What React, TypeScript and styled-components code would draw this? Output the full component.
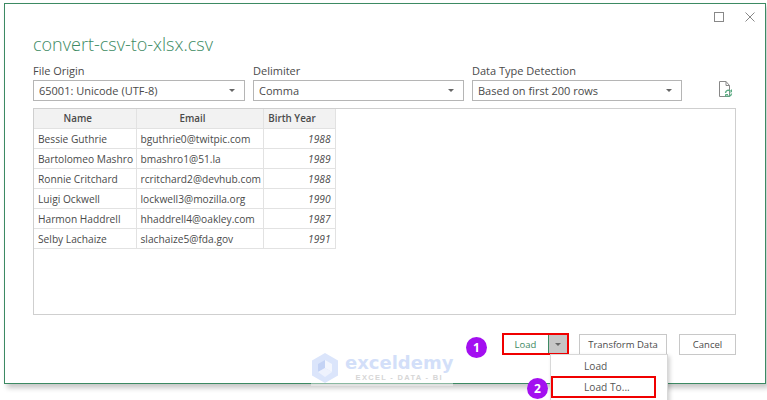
import { createGlobalStyle } from "styled-components";
import styled from "styled-components";

const GlobalStyle = createGlobalStyle`
  html, body {
    margin: 0;
    padding: 0;
    background: #fff;
    overflow: hidden;
  }
  body {
    font-family: "Open Sans", "Liberation Sans", sans-serif;
    color: #4a4a4a;
  }
`;

const rows = [
  ["Bessie Guthrie", "bguthrie0@twitpic.com", "1988"],
  ["Bartolomeo Mashro", "bmashro1@51.la", "1989"],
  ["Ronnie Critchard", "rcritchard2@devhub.com", "1988"],
  ["Luigi Ockwell", "lockwell3@mozilla.org", "1990"],
  ["Harmon Haddrell", "hhaddrell4@oakley.com", "1987"],
  ["Selby Lachaize", "slachaize5@fda.gov", "1991"],
];

export default function App() {
  return (
    <Page>
      <GlobalStyle />
      <Dialog>
        <TitleBar>
          <WindowButton aria-label="Maximize">
            <svg width="10" height="10" viewBox="0 0 10 10">
              <rect x="0.5" y="0.5" width="9" height="9" fill="none" stroke="#888" />
            </svg>
          </WindowButton>
          <WindowButton aria-label="Close">
            <svg width="10" height="10" viewBox="0 0 10 10">
              <path d="M0.5 0.5 9.500 9.500M9.500 0.5 0.5 9.500" stroke="#888" fill="none" />
            </svg>
          </WindowButton>
        </TitleBar>
        <Title>convert-csv-to-xlsx.csv</Title>
        <Options>
          <Field $width={212}>
            <FieldLabel>File Origin</FieldLabel>
            <Select>
              65001: Unicode (UTF-8)
              <Caret />
            </Select>
          </Field>
          <Field $width={211}>
            <FieldLabel>Delimiter</FieldLabel>
            <Select>
              Comma
              <Caret />
            </Select>
          </Field>
          <Field $width={210}>
            <FieldLabel>Data Type Detection</FieldLabel>
            <Select>
              Based on first 200 rows
              <Caret />
            </Select>
          </Field>
          <RefreshIcon width="15" height="17" viewBox="0 0 15 17" aria-label="Refresh">
            <path d="M1.5 0.5H8L11.500 4.5V15.5H1.5Z" fill="#fff" stroke="#888" />
            <path d="M8 0.5V4.5H11.500" fill="none" stroke="#888" />
            <path d="M7.500 12a3 3 0 0 1 5-2M13.500 12.500a3 3 0 0 1-5 2" fill="none" stroke="#5aaa82" strokeWidth="1.4" />
            <path d="M13.500 8.500v2.500h-2.500M7.500 16v-2.500h2.500" fill="none" stroke="#5aaa82" />
          </RefreshIcon>
        </Options>
        <Preview>
          <DataTable>
            <colgroup>
              <col style={{ width: 102 }} />
              <col style={{ width: 127 }} />
              <col style={{ width: 72 }} />
            </colgroup>
            <thead>
              <tr>
                <HeadCell>Name</HeadCell>
                <HeadCell>Email</HeadCell>
                <HeadCell>Birth Year</HeadCell>
              </tr>
            </thead>
            <tbody>
              {rows.map((row) => (
                <tr key={row[1]}>
                  <BodyCell>{row[0]}</BodyCell>
                  <BodyCell>{row[1]}</BodyCell>
                  <YearCell>{row[2]}</YearCell>
                </tr>
              ))}
            </tbody>
          </DataTable>
        </Preview>
        <Footer>
          <SplitButton>
            <SplitMain>Load</SplitMain>
            <SplitArrow>
              <Caret />
            </SplitArrow>
          </SplitButton>
          <Button $width={88}>Transform Data</Button>
          <Button $width={57}>Cancel</Button>
        </Footer>
      </Dialog>

      <Watermark>
        <svg width="28" height="31" viewBox="0 0 28 31">
          <path d="M14 0 27 7.500V22.500L14 30 1 22.500V7.500Z" fill="#dbe5fb" />
          <path d="M14 7 21 11V19L14 15Z" fill="#f3f6fe" />
          <path d="M14 7 7 11V19L14 15Z" fill="#c4d3f5" />
          <path d="M7 19 14 15 21 19 14 24Z" fill="#eef2fd" />
        </svg>
        <WatermarkText>
          <WatermarkName>exceldemy</WatermarkName>
          <WatermarkTag>EXCEL - DATA - BI</WatermarkTag>
        </WatermarkText>
      </Watermark>

      <Badge $left={466} $top={337}>1</Badge>
      <Badge $left={527} $top={378}>2</Badge>
      <LoadHighlight />

      <Menu>
        <MenuItem>Load</MenuItem>
        <MenuItem $marked>Load To...</MenuItem>
      </Menu>
    </Page>
  );
}

const Page = styled.div`
  position: relative;
  width: 767px;
  height: 400px;
  overflow: hidden;
  padding: 3px 0 0 4px;
  box-sizing: border-box;
`;

const Dialog = styled.div`
  width: 762px;
  height: 381px;
  box-sizing: border-box;
  border: 1px solid #3c8a63;
  background: #fff;
  box-shadow: 3px 4px 5px rgba(0, 0, 0, 0.22);
  padding: 0 29px 0 28px;
  display: flex;
  flex-direction: column;
`;

const TitleBar = styled.div`
  display: flex;
  justify-content: flex-end;
  align-items: center;
  gap: 21px;
  height: 26px;
  margin-right: -19px;
  flex: none;
`;

const WindowButton = styled.span`
  display: flex;
  align-items: center;
  justify-content: center;
`;

const Title = styled.h1`
  margin: 1px 0 0;
  font-size: 18px;
  line-height: 26px;
  font-weight: 300;
  color: #3d8a63;
`;

const Options = styled.div`
  display: flex;
  align-items: flex-end;
  gap: 8px;
  margin-top: 6px;
`;

const Field = styled.div<{ $width: number }>`
  width: ${(p) => p.$width}px;
`;

const FieldLabel = styled.div`
  font-size: 11px;
  line-height: 16px;
  margin-bottom: 1px;
`;

const Select = styled.div`
  height: 21px;
  box-sizing: border-box;
  border: 1px solid #b5b5b5;
  padding: 0 9px 0 5px;
  font-size: 11px;
  display: flex;
  align-items: center;
  justify-content: space-between;
`;

const Caret = styled.span`
  width: 0;
  height: 0;
  border-left: 3px solid transparent;
  border-right: 3px solid transparent;
  border-top: 3px solid #666;
`;

const RefreshIcon = styled.svg`
  margin: 0 0 3px 28px;
  flex: none;
`;

const Preview = styled.div`
  width: 703px;
  height: 207px;
  box-sizing: border-box;
  margin-top: 7px;
  border: 1px solid #cfcfcf;
  flex: none;
`;

const DataTable = styled.table`
  border-collapse: collapse;
  table-layout: fixed;
  width: 301px;
  font-size: 10.2px;
`;

const HeadCell = styled.th`
  height: 19px;
  padding: 0 14px 0 0;
  background: #f2f2f2;
  border: 1px solid #e2e2e2;
  border-top: 0;
  border-left: 0;
  font-size: 9.800px;
  font-weight: 600;
  color: #4a4a4a;
  text-align: center;
  white-space: nowrap;
`;

const BodyCell = styled.td`
  height: 19px;
  padding: 0 0 0 4px;
  border: 1px solid #e2e2e2;
  border-left: 0;
  white-space: nowrap;
  overflow: hidden;
`;

const YearCell = styled(BodyCell)`
  padding: 0 4px 0 0;
  text-align: right;
  font-style: italic;
`;

const Footer = styled.div`
  display: flex;
  justify-content: flex-end;
  gap: 12px;
  margin-top: 19px;
`;

const Button = styled.div<{ $width: number }>`
  width: ${(p) => p.$width}px;
  height: 21px;
  box-sizing: border-box;
  border: 1px solid #c8c8c8;
  font-size: 9.500px;
  display: flex;
  align-items: center;
  justify-content: center;
`;

const SplitButton = styled.div`
  width: 64px;
  height: 21px;
  display: flex;
  font-size: 9.500px;
`;

const SplitMain = styled.div`
  flex: 1;
  display: flex;
  align-items: center;
  justify-content: center;
  color: #3d8a63;
`;

const SplitArrow = styled.div`
  width: 18px;
  background: #c6c6c6;
  border-left: 1px solid #3d8a63;
  display: flex;
  align-items: center;
  justify-content: center;
`;

const LoadHighlight = styled.div`
  position: absolute;
  left: 502px;
  top: 333px;
  width: 67px;
  height: 22px;
  box-sizing: border-box;
  border: 2px solid #f00000;
`;

const Menu = styled.div`
  position: absolute;
  left: 550px;
  top: 354px;
  width: 118px;
  height: 60px;
  box-sizing: border-box;
  background: #fff;
  border: 1px solid #d8d8d8;
  box-shadow: 2px 2px 4px rgba(0, 0, 0, 0.18);
`;

const MenuItem = styled.div<{ $marked?: boolean }>`
  width: 105px;
  height: ${(p) => (p.$marked ? 22 : 21)}px;
  box-sizing: border-box;
  padding-left: 31px;
  font-size: 10.2px;
  line-height: 18px;
  color: #555;
  border: 2px solid ${(p) => (p.$marked ? "#f00000" : "transparent")};
`;

const Badge = styled.div<{ $left: number; $top: number }>`
  position: absolute;
  left: ${(p) => p.$left}px;
  top: ${(p) => p.$top}px;
  width: 21px;
  height: 21px;
  border-radius: 50%;
  background: #a30ff0;
  color: #fff;
  font-size: 12px;
  font-weight: 700;
  display: flex;
  align-items: center;
  justify-content: center;
`;

const Watermark = styled.div`
  position: absolute;
  left: 311px;
  top: 353px;
  height: 33px;
  display: flex;
  gap: 6px;
  background: rgba(255, 255, 255, 0.4);
`;

const WatermarkText = styled.div`
  display: flex;
  flex-direction: column;
  align-items: center;
`;

const WatermarkName = styled.div`
  font-family: "DejaVu Sans", sans-serif;
  font-size: 18px;
  line-height: 20px;
  font-weight: 700;
  color: #d3dff9;
`;

const WatermarkTag = styled.div`
  font-family: "Liberation Sans", sans-serif;
  font-size: 7.500px;
  line-height: 9px;
  letter-spacing: 1.3px;
  font-weight: 700;
  color: #d6d6d6;
`;
